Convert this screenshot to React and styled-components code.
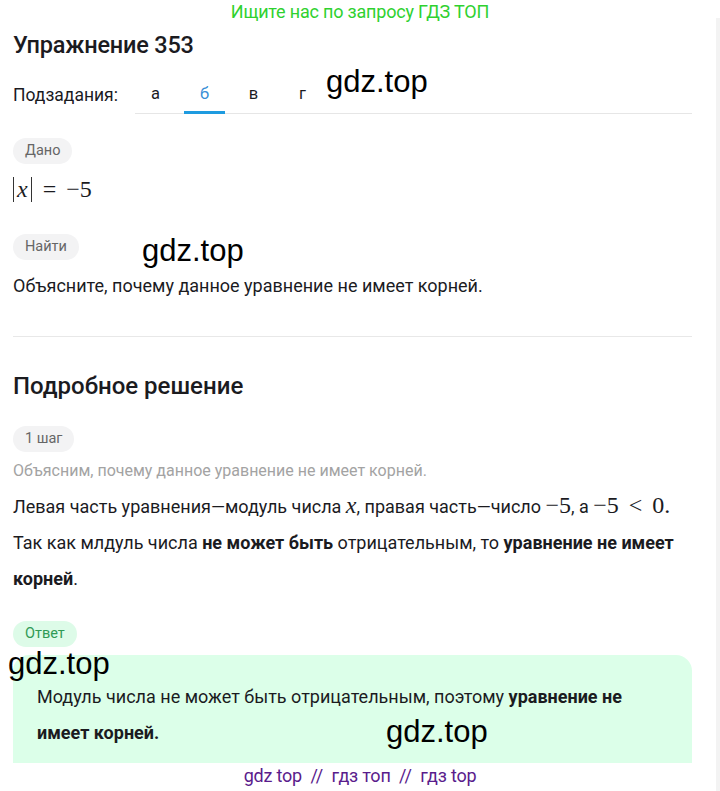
import styled, { createGlobalStyle } from "styled-components";

const Global = createGlobalStyle`
  body {
    margin: 0;
    background: #fff;
    font-family: Roboto, "Noto Sans", sans-serif;
    color: #1b1b1f;
  }
`;

const Page = styled.div`
  position: relative;
  width: 720px;
  min-height: 791px;
  overflow: hidden;
`;

const RightEdge = styled.div`
  position: absolute;
  top: 18px;
  right: 0;
  bottom: 0;
  width: 4px;
  background: #f3f3f3;
`;

const Banner = styled.div`
  text-align: center;
  color: #2fd12f;
  font-size: 18px;
  line-height: 22px;
  padding-top: 1px;
  letter-spacing: -0.2px;
`;

const Main = styled.main`
  width: 679px;
  padding-left: 13px;
`;

const Title = styled.h1`
  margin: 8px 0 0;
  font-size: 23.5px;
  line-height: 28px;
  font-weight: 500;
  letter-spacing: -0.2px;
`;

const Subtasks = styled.div`
  display: flex;
  align-items: flex-end;
  margin-top: 24px;
`;

const SubLabel = styled.span`
  font-size: 17.5px;
  line-height: 22px;
  padding-bottom: 8px;
  width: 122px;
`;

const Tabs = styled.div`
  display: flex;
  gap: 8px;
  flex: 1;
  border-bottom: 1px solid #e6e6e6;
`;

const Tab = styled.span`
  width: 41px;
  text-align: center;
  font-size: 16.5px;
  line-height: 22px;
  padding-bottom: 6px;
  color: ${(p) => (p.$active ? "#3a8fd6" : "#1b1b1f")};
  border-bottom: 3px solid ${(p) => (p.$active ? "#1e9be0" : "transparent")};
  margin-bottom: -1px;
`;

const Pill = styled.span`
  display: inline-block;
  padding: 0 12px;
  height: 26px;
  line-height: 26px;
  border-radius: 13px;
  font-size: 14.5px;
  background: ${(p) => (p.$green ? "#ddfbe8" : "#f3f3f4")};
  color: ${(p) => (p.$green ? "#2f9a55" : "#666")};
`;

const Block = styled.div`
  margin-top: ${(p) => p.$top || 0}px;
`;

const Formula = styled.div`
  font-family: "Liberation Serif", "DejaVu Serif", serif;
  font-size: 24px;
  line-height: 30px;
  margin-top: 10px;
  display: flex;
  align-items: center;
`;

const Abs = styled.span`
  display: inline-block;
  border-left: 1px solid #333;
  border-right: 1px solid #333;
  padding: 0 3px;
  line-height: 25px;
  font-style: italic;
`;

const Op = styled.span`
  margin: 0 10px 0 11px;
`;

const Text = styled.p`
  margin: 0;
  font-size: ${(p) => (p.$muted ? 16 : 18)}px;
  line-height: ${(p) => (p.$muted ? 20 : 36)}px;
  color: ${(p) => (p.$muted ? "#a3a3a3" : "#1b1b1f")};
  b {
    font-weight: 700;
  }
`;

const Divider = styled.hr`
  border: 0;
  border-top: 1px solid #e8e8e8;
  margin: 32px 0 0;
`;

const Heading = styled.h2`
  margin: 34px 0 0;
  font-size: 24px;
  line-height: 30px;
  font-weight: 500;
`;

const Serif = styled.span`
  font-family: "Liberation Serif", "DejaVu Serif", serif;
  font-size: 24px;
  font-style: ${(p) => (p.$italic ? "italic" : "normal")};
  word-spacing: 4px;
`;

const AnswerBox = styled.div`
  margin-top: 8px;
  background: #dcffe9;
  border-radius: 16px 16px 0 0;
  padding: 24px 24px 12px;
`;

const Footer = styled.div`
  text-align: center;
  color: #5a1c8c;
  font-size: 18px;
  line-height: 26px;
  white-space: pre;
  letter-spacing: -0.2px;
`;

const Mark = styled.span`
  position: absolute;
  left: ${(p) => p.$x}px;
  top: ${(p) => p.$y}px;
  font-family: "Liberation Sans", Arial, sans-serif;
  font-size: 31px;
  line-height: 36px;
  color: #000;
  pointer-events: none;
`;

export default function App() {
  return (
    <Page>
      <Global />
      <RightEdge />
      <Banner>Ищите нас по запросу ГДЗ ТОП</Banner>
      <Main>
        <Title>Упражнение 353</Title>
        <Subtasks>
          <SubLabel>Подзадания:</SubLabel>
          <Tabs>
            <Tab>а</Tab>
            <Tab $active>б</Tab>
            <Tab>в</Tab>
            <Tab>г</Tab>
          </Tabs>
        </Subtasks>

        <Block $top={24}>
          <Pill>Дано</Pill>
          <Formula>
            <Abs>x</Abs>
            <Op>=</Op>−5
          </Formula>
        </Block>

        <Block $top={30}>
          <Pill>Найти</Pill>
          <Text style={{ marginTop: 8 }}>
            Объясните, почему данное уравнение не имеет корней.
          </Text>
        </Block>

        <Divider />

        <Heading>Подробное решение</Heading>

        <Block $top={25}>
          <Pill>1 шаг</Pill>
          <Text $muted style={{ marginTop: 9 }}>
            Объясним, почему данное уравнение не имеет корней.
          </Text>
          <Text style={{ marginTop: 6 }}>
            Левая часть уравнения—модуль числа <Serif $italic>x</Serif>, правая
            часть—число <Serif>−5</Serif>, а <Serif>−5 &lt; 0.</Serif>
          </Text>
          <Text>
            Так как млдуль числа <b>не может быть</b> отрицательным, то{" "}
            <b>уравнение не имеет корней</b>.
          </Text>
        </Block>

        <Block $top={24}>
          <Pill $green>Ответ</Pill>
          <AnswerBox>
            <Text>
              Модуль числа не может быть отрицательным, поэтому{" "}
              <b>уравнение не имеет корней.</b>
            </Text>
          </AnswerBox>
        </Block>
      </Main>
      <Footer>{"gdz top  //  гдз топ  //  гдз top"}</Footer>

      <Mark $x={326} $y={64}>gdz.top</Mark>
      <Mark $x={142} $y={233}>gdz.top</Mark>
      <Mark $x={8} $y={646}>gdz.top</Mark>
      <Mark $x={386} $y={714}>gdz.top</Mark>
    </Page>
  );
}
